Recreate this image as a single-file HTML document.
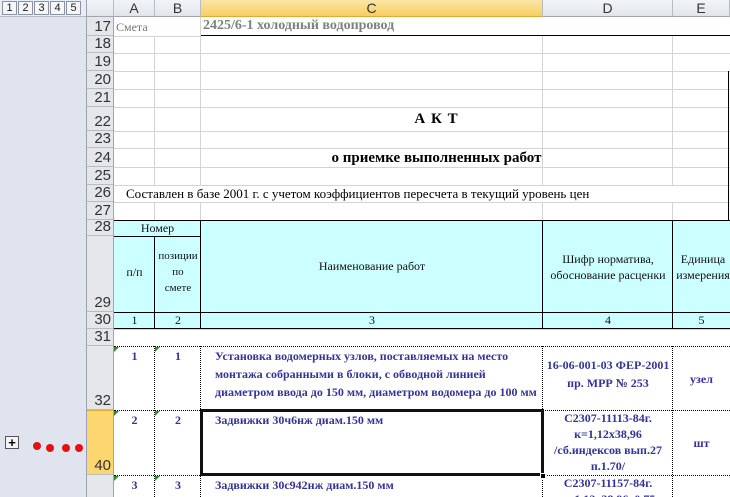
<!DOCTYPE html>
<html><head><meta charset="utf-8"><style>
*{margin:0;padding:0;box-sizing:border-box}
html,body{width:730px;height:497px;overflow:hidden}
body{background:#fff;position:relative;font-family:"Liberation Serif","Noto Serif CJK SC",serif}
div{position:absolute}
.hl{height:1px;background:#d4d4d4}
.vl{width:1px;background:#d4d4d4}
.rh{left:87px;width:27px;text-align:right;padding-right:3px;font:15px "Liberation Sans",sans-serif;color:#333;background:#e4e6ea;border-bottom:1px solid #b8bcc4;display:flex;align-items:flex-end;justify-content:flex-end;line-height:17px}
.ch{top:0;height:17px;font:14px "Liberation Sans",sans-serif;color:#333;text-align:center;line-height:17px;background:linear-gradient(#f2f4f7,#e1e5ea);border-right:1px solid #b8bcc4;border-bottom:1px solid #9ea5b0}
.cy{background:#ccffff}
.bk{background:#000}
.t{font-size:12px;color:#111;text-align:center}
.b{font-weight:bold;color:#333399;font-size:12px;line-height:18px}
.dh{height:0;border-top:1px dotted #000}
.dv{width:0;border-left:1px dotted #000}
</style></head><body>
<div style="left:0;top:0;width:87px;height:497px;background:#dfe4ef;border-right:1px solid #9aa3b3"></div>
<div style="left:0;top:0;width:86px;height:17px;background:#e9edf4;border-bottom:1px solid #b8bcc4"></div>
<div style="left:2px;top:1px;display:flex;gap:1px;font:11px 'Liberation Sans',sans-serif;color:#222">
<span style="display:inline-block;width:15px;height:14px;border:1px solid #8a93a3;background:#f4f6fa;text-align:center;line-height:12px">1</span>
<span style="display:inline-block;width:15px;height:14px;border:1px solid #8a93a3;background:#f4f6fa;text-align:center;line-height:12px">2</span>
<span style="display:inline-block;width:15px;height:14px;border:1px solid #8a93a3;background:#f4f6fa;text-align:center;line-height:12px">3</span>
<span style="display:inline-block;width:15px;height:14px;border:1px solid #8a93a3;background:#f4f6fa;text-align:center;line-height:12px">4</span>
<span style="display:inline-block;width:15px;height:14px;border:1px solid #8a93a3;background:#f4f6fa;text-align:center;line-height:12px">5</span>
</div>
<div style="left:5px;top:436px;width:14px;height:13px;border:1px solid #555;background:#f4f4f4;font:bold 13px 'Liberation Sans',sans-serif;line-height:11px;text-align:center">+</div>
<div style="left:33px;top:442px;width:8px;height:8px;border-radius:50%;background:#e61010"></div>
<div style="left:46px;top:444px;width:8px;height:8px;border-radius:50%;background:#e61010"></div>
<div style="left:62px;top:444px;width:8px;height:8px;border-radius:50%;background:#e61010"></div>
<div style="left:75px;top:444px;width:8px;height:8px;border-radius:50%;background:#e61010"></div>

<div class="ch" style="left:87px;width:27px"></div>
<div class="ch" style="left:114px;width:41px">A</div>
<div class="ch" style="left:155px;width:46px">B</div>
<div class="ch" style="left:201px;width:342px;background:linear-gradient(#fbe6a6,#f6cf62);border-bottom:1px solid #e6a935">C</div>
<div class="ch" style="left:543px;width:130px">D</div>
<div class="ch" style="left:673px;width:57px">E</div>

<div class="rh" style="top:17px;height:19px">17</div>
<div class="rh" style="top:36px;height:17px">18</div>
<div class="rh" style="top:53px;height:18px">19</div>
<div class="rh" style="top:71px;height:18px">20</div>
<div class="rh" style="top:89px;height:18px">21</div>
<div class="rh" style="top:107px;height:24px">22</div>
<div class="rh" style="top:131px;height:17px">23</div>
<div class="rh" style="top:148px;height:19px">24</div>
<div class="rh" style="top:167px;height:18px">25</div>
<div class="rh" style="top:185px;height:17px">26</div>
<div class="rh" style="top:202px;height:18px">27</div>
<div class="rh" style="top:220px;height:16px">28</div>
<div class="rh" style="top:236px;height:76px">29</div>
<div class="rh" style="top:312px;height:17px">30</div>
<div class="rh" style="top:329px;height:17px">31</div>
<div class="rh" style="top:346px;height:64px">32</div>
<div class="rh" style="top:410px;height:65px;background:#fcd66e;border-top:1px solid #e6a935">40</div>
<div class="rh" style="top:475px;height:22px;border-bottom:none"></div>
<div style="left:113px;top:17px;width:1px;height:480px;background:#9ea5b0"></div>

<div class="hl" style="left:114px;top:53px;width:616px"></div>
<div class="hl" style="left:114px;top:71px;width:616px"></div>
<div class="hl" style="left:114px;top:89px;width:616px"></div>
<div class="hl" style="left:114px;top:107px;width:616px"></div>
<div class="hl" style="left:114px;top:131px;width:616px"></div>
<div class="hl" style="left:114px;top:148px;width:616px"></div>
<div class="hl" style="left:114px;top:167px;width:616px"></div>
<div class="hl" style="left:114px;top:185px;width:616px"></div>
<div class="hl" style="left:114px;top:202px;width:616px"></div>
<div class="hl" style="left:114px;top:36px;width:87px"></div>
<div class="hl" style="left:114px;top:329px;width:616px"></div>
<div class="vl" style="left:154px;top:36px;height:149px"></div>
<div class="vl" style="left:154px;top:202px;height:18px"></div>
<div class="vl" style="left:200px;top:17px;height:168px"></div>
<div class="vl" style="left:200px;top:202px;height:18px"></div>
<div class="vl" style="left:542px;top:36px;height:149px"></div>
<div class="vl" style="left:542px;top:202px;height:18px"></div>
<div class="vl" style="left:672px;top:36px;height:149px"></div>
<div class="vl" style="left:672px;top:202px;height:18px"></div>
<div class="bk" style="left:201px;top:35px;width:529px;height:1px"></div>
<div class="bk" style="left:728px;top:71px;width:1px;height:150px"></div>

<div style="left:116px;top:20px;font-size:12px;color:#777">Смета</div>
<div style="left:203px;top:18px;font-size:14px;font-weight:bold;color:#808080">2425/6-1 холодный водопровод</div>
<div style="left:201px;top:111px;width:471px;text-align:center;font-size:15px;font-weight:bold;letter-spacing:1px">А К Т</div>
<div style="left:201px;top:150px;width:471px;text-align:center;font-size:15px;font-weight:bold">о приемке выполненных работ</div>
<div style="left:126px;top:186px;font-size:13px;white-space:nowrap">Составлен в базе 2001 г. с учетом коэффициентов пересчета в текущий уровень цен</div>

<div class="cy" style="left:114px;top:220px;width:616px;height:109px"></div>
<div class="bk" style="left:114px;top:220px;width:616px;height:1px"></div>
<div class="bk" style="left:114px;top:236px;width:87px;height:1px"></div>
<div class="bk" style="left:114px;top:312px;width:616px;height:1px"></div>
<div class="bk" style="left:114px;top:328px;width:616px;height:1px"></div>
<div class="bk" style="left:154px;top:236px;width:1px;height:93px"></div>
<div class="bk" style="left:200px;top:220px;width:1px;height:109px"></div>
<div class="bk" style="left:542px;top:220px;width:1px;height:109px"></div>
<div class="bk" style="left:672px;top:220px;width:1px;height:109px"></div>
<div class="t" style="left:114px;top:221px;width:87px">Номер</div>
<div class="t" style="left:114px;top:265px;width:41px">п/п</div>
<div class="t" style="left:155px;top:248px;width:46px;line-height:16px;font-size:11px">позиции<br>по<br>смете</div>
<div class="t" style="left:201px;top:259px;width:342px">Наименование работ</div>
<div class="t" style="left:543px;top:251px;width:130px;line-height:16px">Шифр норматива,<br>обоснование расценки</div>
<div class="t" style="left:673px;top:251px;width:60px;line-height:16px">Единица<br>измерения</div>
<div class="t" style="left:114px;top:313px;width:41px">1</div>
<div class="t" style="left:155px;top:313px;width:46px">2</div>
<div class="t" style="left:201px;top:313px;width:342px">3</div>
<div class="t" style="left:543px;top:313px;width:130px">4</div>
<div class="t" style="left:673px;top:313px;width:57px">5</div>

<div class="dh" style="left:114px;top:346px;width:616px"></div>
<div class="dh" style="left:114px;top:410px;width:616px"></div>
<div class="dh" style="left:114px;top:475px;width:616px"></div>
<div class="dv" style="left:154px;top:346px;height:151px"></div>
<div class="dv" style="left:200px;top:346px;height:151px"></div>
<div class="dv" style="left:542px;top:346px;height:151px"></div>
<div class="dv" style="left:672px;top:346px;height:151px"></div>
<div style="left:114px;top:347px;border-top:5px solid #2e8b2e;border-right:5px solid transparent"></div>
<div style="left:155px;top:347px;border-top:5px solid #2e8b2e;border-right:5px solid transparent"></div>
<div style="left:114px;top:411px;border-top:5px solid #2e8b2e;border-right:5px solid transparent"></div>
<div style="left:155px;top:411px;border-top:5px solid #2e8b2e;border-right:5px solid transparent"></div>
<div style="left:114px;top:476px;border-top:5px solid #2e8b2e;border-right:5px solid transparent"></div>
<div style="left:155px;top:476px;border-top:5px solid #2e8b2e;border-right:5px solid transparent"></div>

<div class="b" style="left:114px;top:347px;width:41px;text-align:center">1</div>
<div class="b" style="left:155px;top:347px;width:46px;text-align:center">1</div>
<div class="b" style="left:215px;top:347px;width:330px;white-space:nowrap">Установка водомерных узлов, поставляемых на место<br>монтажа собранными в блоки, с обводной линией<br>диаметром ввода до 150 мм, диаметром водомера до 100 мм</div>
<div class="b" style="left:543px;top:356px;width:130px;text-align:center">16-06-001-03 ФЕР-2001<br>пр. МРР № 253</div>
<div class="b" style="left:673px;top:370px;width:57px;text-align:center">узел</div>

<div class="b" style="left:114px;top:411px;width:41px;text-align:center">2</div>
<div class="b" style="left:155px;top:411px;width:46px;text-align:center">2</div>
<div class="b" style="left:215px;top:411px">Задвижки 30ч6нж диам.150 мм</div>
<div class="b" style="left:543px;top:410px;width:130px;text-align:center;line-height:16px">С2307-11113-84г.<br>к=1,12х38,96<br>/сб.индексов вып.27<br>п.1.70/</div>
<div class="b" style="left:673px;top:434px;width:57px;text-align:center">шт</div>
<div style="left:200px;top:409px;width:344px;height:67px;border:3px solid #111"></div>
<div style="left:540px;top:473px;width:6px;height:6px;background:#000;border:1px solid #fff"></div>

<div class="b" style="left:114px;top:476px;width:41px;text-align:center">3</div>
<div class="b" style="left:155px;top:476px;width:46px;text-align:center">3</div>
<div class="b" style="left:215px;top:476px">Задвижки 30с942нж диам.150 мм</div>
<div class="b" style="left:543px;top:475px;width:130px;text-align:center;line-height:16px">С2307-11157-84г.<br>к=1,12х38,96х0,75</div>
</body></html>
